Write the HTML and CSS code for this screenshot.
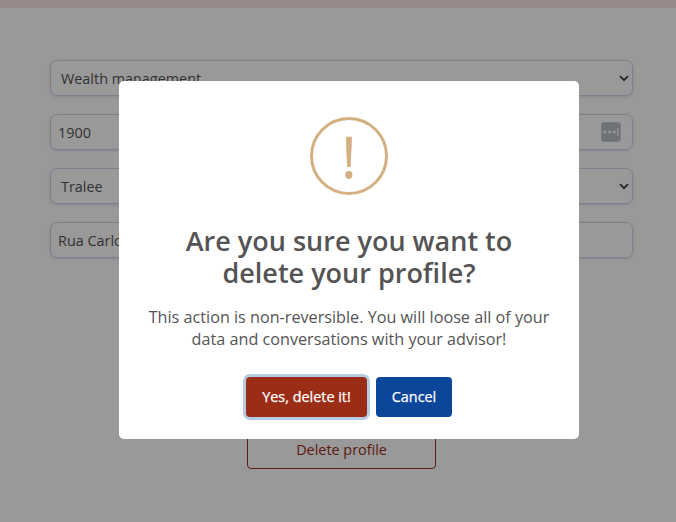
FILE: index.html
```html
<!DOCTYPE html>
<html lang="en">
<head>
<meta charset="utf-8">
<title>Profile</title>
<link rel="stylesheet" href="styles.css">
</head>
<body>
<div class="topbar"></div>
<main class="profile">
  <div class="field field-select"><span>Wealth management</span>
    <svg class="chevron" width="10" height="7" viewBox="0 0 10 7"><path d="M1 1.2 5 5.2 9 1.2"/></svg></div>
  <div class="field"><span>1900</span>
    <svg class="autofill" width="20" height="20" viewBox="0 0 20 20"><rect class="autofill-box" x=".3" y=".3" width="19.4" height="19.4" rx="3"/><circle cx="4" cy="10" r="1.4"/><circle cx="8.7" cy="10" r="1.4"/><circle cx="13.4" cy="10" r="1.4"/><rect x="16.2" y="6" width="1.2" height="8"/></svg></div>
  <div class="field field-select"><span>Tralee</span>
    <svg class="chevron" width="10" height="7" viewBox="0 0 10 7"><path d="M1 1.2 5 5.2 9 1.2"/></svg></div>
  <div class="field"><span>Rua Carlos</span></div>
  <button class="delete-profile">Delete profile</button>
</main>
<div class="backdrop">
  <section class="modal" role="dialog" aria-modal="true">
    <div class="warning"><span>!</span></div>
    <h2>Are you sure you want to<br>delete your profile?</h2>
    <p>This action is non-reversible. You will loose all of your<br>data and conversations with your advisor!</p>
    <div class="actions">
      <button class="confirm">Yes, delete it!</button>
      <button class="cancel">Cancel</button>
    </div>
  </section>
</div>
</body>
</html>
```
FILE: styles.css
```css
* { box-sizing: border-box; }
body {
  margin: 0;
  height: 522px;
  overflow: hidden;
  background: #fff;
  font-family: "Open Sans", sans-serif;
  color: #545454;
}
button { font-family: inherit; margin: 0; }
.topbar { height: 8px; background: #fae4e1; }
.profile {
  display: flex;
  flex-direction: column;
  gap: 18px;
  padding: 52px 43px 0 50px;
}
.field {
  display: flex;
  align-items: center;
  justify-content: space-between;
  height: 36px;
  padding: 0 11px 0 7px;
  border: 1px solid #d2d3ec;
  border-radius: 7px;
  box-shadow: 0 1px 3px rgba(80, 85, 140, .18);
  font-size: 14.4px;
}
.field-select { padding: 0 3px 0 10px; }
.chevron { fill: none; stroke: #444; stroke-width: 1.9; }
.autofill { fill: #fff; }
.autofill-box { fill: #b9c0c9; }
.delete-profile {
  align-self: center;
  width: 189px;
  height: 38px;
  margin-top: 155px;
  padding: 0 0 2px;
  border: 1px solid #9b2d16;
  border-radius: 4px;
  background: transparent;
  color: #9b2d16;
  font-size: 14.4px;
}
.backdrop {
  position: fixed;
  inset: 0;
  padding: 81px 97px 0 119px;
  background: rgba(0, 0, 0, .4);
}
.modal {
  display: flex;
  flex-direction: column;
  align-items: center;
  height: 358px;
  padding-top: 36px;
  border-radius: 5px;
  background: #fff;
  text-align: center;
}
.warning {
  display: flex;
  align-items: center;
  justify-content: center;
  width: 78px;
  height: 78px;
  border: 3px solid #d4af82;
  border-radius: 50%;
  color: #d4af82;
  font-size: 56px;
  line-height: 72px;
  -webkit-text-stroke: .6px #d4af82;
}
h2 {
  margin: 30px 0 0;
  font-size: 27px;
  font-weight: 600;
  line-height: 32px;
}
p {
  margin: 17px 0 0;
  font-size: 16.2px;
  line-height: 22px;
}
.actions { display: flex; gap: 9px; margin-top: 27px; }
.actions button {
  height: 40px;
  padding: 0 0 2px;
  border: 0;
  border-radius: 4px;
  color: #fff;
  font-size: 14.4px;
  font-weight: 500;
  -webkit-text-stroke: .25px #fff;
}
.actions .confirm { width: 121px; background: #9b2d16; box-shadow: 0 0 0 3px #b3cce4; }
.actions .cancel { width: 76px; background: #0b469b; }
```
